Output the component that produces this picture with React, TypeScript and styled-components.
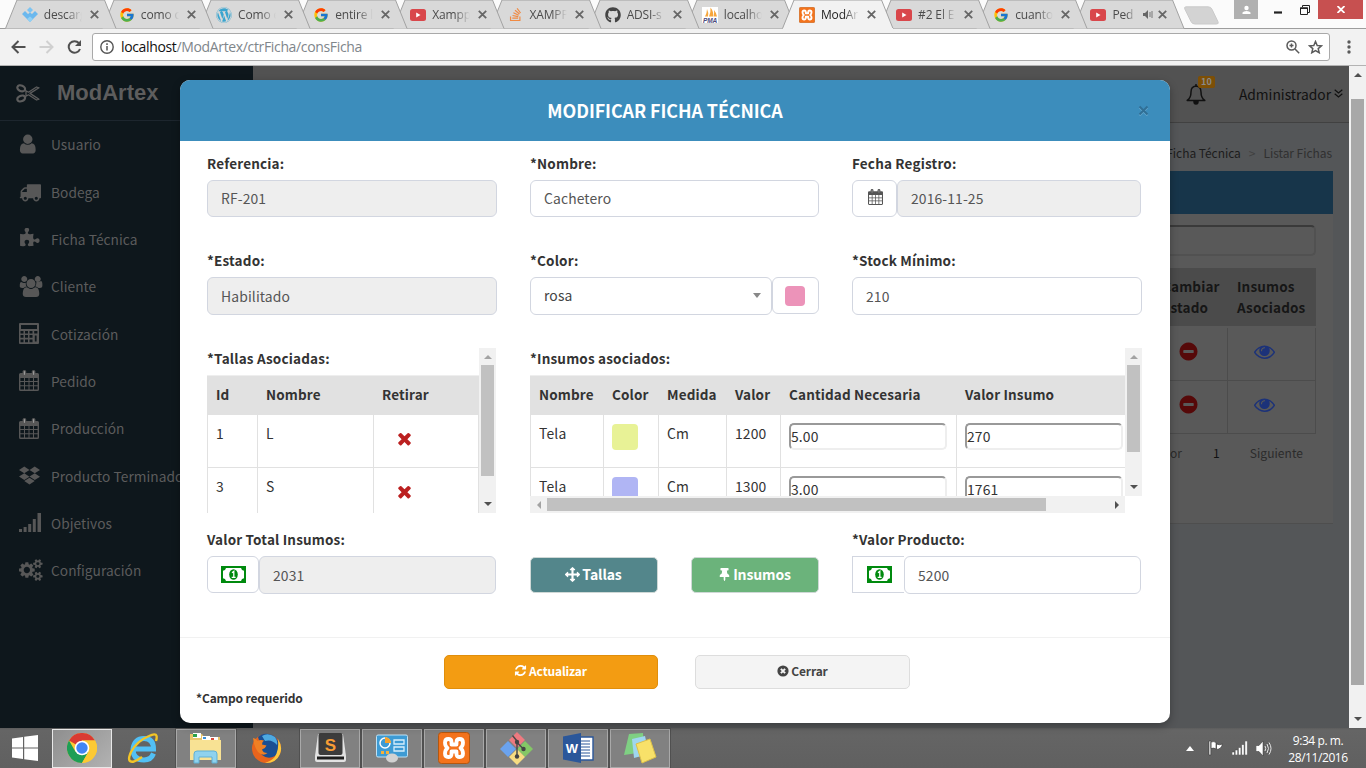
import React from "react";
import styled, { createGlobalStyle, css } from "styled-components";
import { FcGoogle } from "react-icons/fc";
import { FaWordpress, FaGithub, FaStackOverflow, FaDropbox, FaThumbtack } from "react-icons/fa";

const GlobalStyle = createGlobalStyle`
  * { box-sizing: border-box; }
  body { margin: 0; overflow: hidden; background: #545658; }
`;

const source = `"Noto Sans CJK JP", "Noto Sans CJK SC", sans-serif`;
const segoe = `"Open Sans", "Noto Sans", sans-serif`;

/* ---------- icons ---------- */

const FA = {
  user: "M1536 1399q0 109-62.5 187t-150.5 78h-854q-88 0-150.5-78t-62.5-187q0-85 8.5-160.5t31.5-152 58.5-131 94-89 134.5-34.5q131 128 313 128t313-128q76 0 134.5 34.5t94 89 58.5 131 31.5 152 8.5 160.5zm-256-887q0 159-112.5 271.5t-271.5 112.5-271.5-112.5-112.5-271.5 112.5-271.5 271.5-112.5 271.5 112.5 112.5 271.5z",
  truck: "M640 1408q0-52-38-90t-90-38-90 38-38 90 38 90 90 38 90-38 38-90zm-384-512h384v-256h-158q-13 0-22 9l-195 195q-9 9-9 22v30zm1280 512q0-52-38-90t-90-38-90 38-38 90 38 90 90 38 90-38 38-90zm256-1088v1024q0 15-4 26.5t-13.5 18.5-16.5 11.5-23.5 6-22.5 2-25.5 0-22.5-.5q0 106-75 181t-181 75-181-75-75-181h-384q0 106-75 181t-181 75-181-75-75-181h-64q-3 0-22.5.5t-25.5 0-22.5-2-23.5-6-16.5-11.5-13.5-18.5-4-26.5q0-26 19-45t45-19v-320q0-8-.5-35t0-38 2.5-34.5 6.5-37 14-30.5 22.5-30l198-198q19-19 50.5-32t58.5-13h160v-192q0-26 19-45t45-19h1024q26 0 45 19t19 45z",
  puzzle: "M1755 1083q0 81-44.5 135t-123.5 54q-41 0-77.5-17.5t-59-38-56.5-38-71-17.5q-110 0-110 124 0 39 16 115t15 115v5q-22 0-33 1-34 3-97.5 11.5t-115.5 13.5-98 5q-61 0-103-26.5t-42-83.5q0-37 17.5-71t38-56.5 38-59 17.5-77.5q0-79-54-123.5t-135-44.5q-84 0-143 45.5t-59 127.5q0 43 15 83t33.5 64.5 33.5 53 15 50.5q0 45-46 89-37 35-117 35-95 0-245-24-9-2-27.5-4t-27.5-4l-13-2q-1 0-3-1-2 0-2-1v-1024q2 1 17.5 3.5t34 5 21.5 3.5q150 24 245 24 80 0 117-35 46-44 46-89 0-22-15-50.5t-33.5-53-33.5-64.5-15-83q0-82 59-127.5t144-45.5q80 0 134 44.5t54 123.5q0 41-17.5 77.5t-38 59-38 56.5-17.5 71q0 57 42 83.5t103 26.5q64 0 180-15t163-17v2q-1 2-3.5 17.5t-5 34-3.5 21.5q-24 150-24 245 0 80 35 117 44 46 89 46 22 0 50.5-15t53-33.5 64.5-33.5 83-15q82 0 127.5 59t45.5 143z",
  users: "M657 896q-162 5-265 128h-134q-82 0-138-40.5t-56-118.5q0-353 124-353 6 0 43.5 21t97.5 42.5 119 21.5q67 0 133-23-5 37-5 66 0 159 93 332zm1071 637q0 120-73 189.5t-194 69.5h-874q-121 0-194-69.5t-73-189.5q0-53 3.5-103.5t14-109 26.5-108.5 43-97.5 62-81 85.5-53.5 111.5-20q10 0 43 21.5t73 48 107 48 135 21.5 135-21.5 107-48 73-48 43-21.5q61 0 111.5 20t85.5 53.5 62 81 43 97.5 26.5 108.5 14 109 3.5 103.5zm-1024-1277q0 106-75 181t-181 75-181-75-75-181 75-181 181-75 181 75 75 181zm704 384q0 159-112.5 271.5t-271.5 112.5-271.5-112.5-112.5-271.5 112.5-271.5 271.5-112.5 271.5 112.5 112.5 271.5zm576 225q0 78-56 118.5t-138 40.5h-134q-103-123-265-128 93-173 93-332 0-29-5-66 66 23 133 23 59 0 119-21.5t97.5-42.5 43.5-21q124 0 124 353zm-128-609q0 106-75 181t-181 75-181-75-75-181 75-181 181-75 181 75 75 181z",
  cogs: "M896 896q0-106-75-181t-181-75-181 75-75 181 75 181 181 75 181-75 75-181zm768 512q0-52-38-90t-90-38-90 38-38 90q0 53 37.5 90.5t90.5 37.5 90.5-37.5 37.5-90.5zm0-1024q0-52-38-90t-90-38-90 38-38 90q0 53 37.5 90.5t90.5 37.5 90.5-37.5 37.5-90.5zm-384 421v185q0 10-7 19.5t-16 10.5l-155 24q-11 35-32 76 34 48 90 115 7 11 7 20 0 12-7 19-23 30-82.5 89.5t-78.5 59.5q-11 0-21-7l-115-90q-37 19-77 31-11 108-23 155-7 24-30 24h-186q-11 0-20-7.5t-10-17.5l-23-153q-34-10-75-31l-118 89q-7 7-20 7-11 0-21-8-144-133-144-160 0-9 7-19 10-14 41-53t47-61q-23-44-35-82l-152-24q-10-1-17-9.5t-7-19.5v-185q0-10 7-19.5t16-10.5l155-24q11-35 32-76-34-48-90-115-7-11-7-20 0-12 7-20 22-30 82-89t79-59q11 0 21 7l115 90q34-18 77-32 11-108 23-154 7-24 30-24h186q11 0 20 7.5t10 17.5l23 153q34 10 75 31l118-89q8-7 20-7 11 0 21 8 144 133 144 160 0 8-7 19-12 16-42 54t-45 60q23 48 34 82l152 23q10 2 17 10.5t7 19.5zm640 533v140q0 16-149 31-12 27-30 52 51 113 51 138 0 4-4 7-122 71-124 71-8 0-46-47t-52-68q-20 2-30 2t-30-2q-14 21-52 68t-46 47q-2 0-124-71-4-3-4-7 0-25 51-138-18-25-30-52-149-15-149-31v-140q0-16 149-31 13-29 30-52-51-113-51-138 0-4 4-7 4-2 35-20t59-34 30-16q8 0 46 46.5t52 67.5q20-2 30-2t30 2q51-71 92-112l6-2q4 0 124 70 4 3 4 7 0 25-51 138 17 23 30 52 149 15 149 31zm0-1024v140q0 16-149 31-12 27-30 52 51 113 51 138 0 4-4 7-122 71-124 71-8 0-46-47t-52-68q-20 2-30 2t-30-2q-14 21-52 68t-46 47q-2 0-124-71-4-3-4-7 0-25 51-138-18-25-30-52-149-15-149-31v-140q0-16 149-31 13-29 30-52-51-113-51-138 0-4 4-7 4-2 35-20t59-34 30-16q8 0 46 46.5t52 67.5q20-2 30-2t30 2q51-71 92-112l6-2q4 0 124 70 4 3 4 7 0 25-51 138 17 23 30 52 149 15 149 31z",
  times: "M1490 1322q0 40-28 68l-136 136q-28 28-68 28t-68-28l-294-294-294 294q-28 28-68 28t-68-28l-136-136q-28-28-28-68t28-68l294-294-294-294q-28-28-28-68t28-68l136-136q28-28 68-28t68 28l294 294 294-294q28-28 68-28t68 28l136 136q28 28 28 68t-28 68l-294 294 294 294q28 28 28 68z",
  eye: "M1664 960q-152-236-381-353 61 104 61 225 0 185-131.5 316.5t-316.5 131.5-316.5-131.5-131.5-316.5q0-121 61-225-229 117-381 353 133 205 333.5 326.5t434.5 121.5 434.5-121.5 333.5-326.5zm-720-384q0-20-14-34t-34-14q-125 0-214.5 89.5t-89.5 214.5q0 20 14 34t34 14 34-14 14-34q0-86 61-147t147-61q20 0 34-14t14-34zm848 384q0 34-20 69-140 230-376.5 368.5t-499.5 138.5-499.5-139-376.5-368q-20-35-20-69t20-69q140-229 376.5-368t499.5-139 499.5 139 376.5 368q20 35 20 69z",
  minusCircle: "M1344 960v-128q0-26-19-45t-45-19h-768q-26 0-45 19t-19 45v128q0 26 19 45t45 19h768q26 0 45-19t19-45zm320-64q0 209-103 385.5t-279.5 279.5-385.5 103-385.5-103-279.5-279.5-103-385.5 103-385.5 279.5-279.5 385.5-103 385.5 103 279.5 279.5 103 385.5z",
  refresh: "M1639 1056q0 5-1 7-64 268-268 434.5t-478 166.5q-146 0-282.5-55t-243.5-157l-129 129q-19 19-45 19t-45-19-19-45v-448q0-26 19-45t45-19h448q26 0 45 19t19 45-19 45l-137 137q71 66 161 102t187 36q134 0 250-65t186-179q11-17 53-117 8-23 30-23h192q13 0 22.5 9.5t9.5 22.5zm25-800v448q0 26-19 45t-45 19h-448q-26 0-45-19t-19-45 19-45l138-138q-148-137-349-137-134 0-250 65t-186 179q-11 17-53 117-8 23-30 23h-199q-13 0-22.5-9.5t-9.5-22.5v-7q65-268 270-434.5t480-166.5q146 0 284 55.5t245 156.5l130-129q19-19 45-19t45 19 19 45z",
  arrows: "M1792 896q0 26-19 45l-256 256q-19 19-45 19t-45-19-19-45v-128h-384v384h128q26 0 45 19t19 45-19 45l-256 256q-19 19-45 19t-45-19l-256-256q-19-19-19-45t19-45 45-19h128v-384h-384v128q0 26-19 45t-45 19-45-19l-256-256q-19-19-19-45t19-45l256-256q19-19 45-19t45 19 19 45v128h384v-384h-128q-26 0-45-19t-19-45 19-45l256-256q19-19 45-19t45 19l256 256q19 19 19 45t-19 45-45 19h-128v384h384v-128q0-26 19-45t45-19 45 19l256 256q19 19 19 45z",
};

const Glyph = ({ d, w = 1792, size = 16, x = 0 }: { d: string; w?: number; size?: number; x?: number }) => (
  <svg width={(size * w) / 1792} height={size} viewBox={`${x} 0 ${w} 1792`} fill="currentColor"><path d={d} /></svg>
);

const CalendarIcon = ({ w, h }: { w: number; h: number }) => (
  <svg width={w} height={h} viewBox="0 0 20 21" fill="currentColor" preserveAspectRatio="none">
    <path fillRule="evenodd" d="M1.5 3H18.500Q20 3 20 4.500V19.500Q20 21 18.500 21H1.500Q0 21 0 19.500V4.500Q0 3 1.500 3ZM1.400 8V11H5V8ZM6 8V11H9.500V8ZM10.500 8V11H14V8ZM15 8V11H18.600V8ZM1.400 12V15.200H5V12ZM6 12V15.200H9.500V12ZM10.500 12V15.200H14V12ZM15 12V15.200H18.600V12ZM1.400 16.200V19.600H5V16.200ZM6 16.200V19.600H9.500V16.200ZM10.500 16.200V19.600H14V16.200ZM15 16.200V19.600H18.600V16.200Z" />
    <rect x="3.600" y="0" width="3.600" height="6" rx="1.600" /><rect x="12.800" y="0" width="3.600" height="6" rx="1.600" />
    <rect x="4.900" y="1.200" width="1" height="3.600" fill="#fff" opacity=".45" /><rect x="14.100" y="1.200" width="1" height="3.600" fill="#fff" opacity=".45" />
  </svg>
);

const CalculatorIcon = () => (
  <svg width="20" height="21" viewBox="0 0 20 21" fill="currentColor">
    <path fillRule="evenodd" d="M1 0H19Q20 0 20 1V20Q20 21 19 21H1Q0 21 0 20V1Q0 0 1 0ZM2 2V6H18V2ZM1.500 8V10.500H4.500V8ZM6 8V10.500H9V8ZM10.500 8V10.500H13.500V8ZM15.200 8V10.500H18.400V8ZM1.500 12V14.800H4.500V12ZM6 12V14.800H9V12ZM10.500 12V14.800H13.500V12ZM15.800 12.600V18.600H17.600V12.600ZM1.500 16.400V19.200H4.500V16.400ZM6 16.400V19.200H9V16.400ZM10.500 16.400V19.200H13.500V16.400Z" />
  </svg>
);

const SignalIcon = () => (
  <svg width="22" height="19" viewBox="0 0 22 19" fill="currentColor">
    <path d="M0 16h3v3H0zM4.600 14h3v5h-3zM9.200 11h3v8h-3zM13.800 6h3v13h-3zM18.500 0h3.500v19h-3.500z" />
  </svg>
);

const ScissorsIcon = () => (
  <svg width="24" height="19" viewBox="0 0 24 19" fill="none" stroke="currentColor" strokeWidth="1.500">
    <ellipse cx="5.200" cy="4.300" rx="4" ry="2.800" strokeWidth="2.200" transform="rotate(22 5.200 4.300)" />
    <ellipse cx="5.200" cy="14.500" rx="4" ry="2.800" strokeWidth="2.200" transform="rotate(-22 5.200 14.500)" />
    <path d="M9 6.200 12.500 8.200 20.500 3 23 3.800 14 9.400 23 15.200 20.500 16 12.500 10.800 9 12.800M10 6.800v5.500" strokeLinejoin="round" strokeWidth="1.300" />
  </svg>
);

const MoneyIcon = () => (
  <svg width="25" height="17" viewBox="0 0 25 17">
    <rect width="25" height="17" fill="#008a0e" />
    <path d="M5 2H20Q20.500 4.500 23 4.800V12.200Q20.500 12.500 20 15H5Q4.500 12.500 2 12.200V4.800Q4.500 4.500 5 2Z" fill="#fff" />
    <ellipse cx="12.500" cy="8.500" rx="4.300" ry="5.300" fill="#008a0e" />
    <path d="M11 6.800 12.800 5.400V11M10.700 11.300H14.600" stroke="#fff" strokeWidth="1.300" fill="none" />
  </svg>
);

const TimesCircle = () => (
  <svg width="12" height="12" viewBox="0 0 12 12"><circle cx="6" cy="6" r="5.600" fill="#444" /><path d="m3.900 3.900 4.200 4.200m0-4.200-4.200 4.200" stroke="#f4f4f4" strokeWidth="2" /></svg>
);

const XamppMark = ({ size }: { size: number }) => (
  <svg width={size} height={size} viewBox="0 0 32 32">
    <rect x=".5" y=".5" width="31" height="31" rx="3" fill="#f4731c" stroke="#b4570f" />
    <path d="M13.500 12V10Q13.500 7 10.300 7T7 10.500Q7 14 9.500 16 7 18 7 21.500T10.300 25 13.500 22V20M18.500 12V10Q18.500 7 21.700 7T25 10.500Q25 14 22.500 16 25 18 25 21.500T21.700 25 18.500 22V20M13.500 12.500h5M13.500 19.500h5" fill="none" stroke="#fff" strokeWidth="3.800" strokeLinecap="round" strokeLinejoin="round" />
  </svg>
);

const YoutubeMark = () => (
  <svg width="16" height="12" viewBox="0 0 16 12"><rect width="16" height="12" rx="2.500" fill="#d9474b" /><path d="M6.200 3.500v5l4.300-2.500z" fill="#fff" /></svg>
);

const PmaMark = () => (
  <svg width="16" height="16" viewBox="0 0 16 16">
    <rect width="16" height="16" fill="#fff" />
    <path d="M3 9.500Q5 6 5 2Q7 6 6 9.500ZM7 9.500Q9 5 8.500.5Q12 5 11 9.500ZM11.500 9.500Q12.500 6 12 3Q14.500 6 15 9.500Z" fill="#f6a63c" />
    <text x="8" y="15.800" textAnchor="middle" fontFamily="Liberation Sans, sans-serif" fontWeight="700" fontStyle="italic" fontSize="6.500" fill="#4b4b7d">PMA</text>
  </svg>
);

const UptodownMark = () => (
  <svg width="16" height="16" viewBox="0 0 16 16">
    <path d="M8 0l3 3-3 3-3-3z" fill="#7cc4f2" /><path d="M3 4l3 3 2-1.500L10 7l3-3 3 3-8 8-8-8z" fill="#6bb8ee" /><path d="M8 9.500l3 2.500-3 3-3-3z" fill="#8fd0f6" />
  </svg>
);

/* ---------- browser frame ---------- */

const Screen = styled.div`
  width: 1366px; height: 768px; display: flex; flex-direction: column; overflow: hidden;
  font-family: ${source}; position: relative;
  svg { display: block; flex: none; }
`;
const TabStrip = styled.div`
  height: 29px; flex: none; display: flex; background: #fbfbfb; padding-left: 4.700px; position: relative;
  border-bottom: 1px solid #9d9d9d;
`;
const TabBox = styled.div<{ $z: number; $active?: boolean }>`
  width: 112px; height: 29px; margin-right: -14.850px; flex: none; position: relative; z-index: ${p => p.$z};
  display: flex; align-items: center; padding-left: 17px;
  font: 12px ${segoe}; letter-spacing: -0.150px; color: ${p => (p.$active ? "#222" : "#4c4c4c")};
`;
const TabShape = styled.svg` position: absolute; left: 0; top: 0; `;
const TabIcon = styled.span` width: 16px; display: flex; justify-content: center; position: relative; `;
const TabTitle = styled.span<{ $w: number }>`
  margin-left: 6px; width: ${p => p.$w}px; white-space: nowrap; position: relative;
  mask-image: linear-gradient(90deg, #000 60%, transparent 100%);
`;
const TabClose = styled.span` margin-left: auto; margin-right: 18px; position: relative; display: flex; gap: 5px; align-items: center; `;
const NewTab = styled.svg` margin: 6px 0 0 13px; `;
const WindowButtons = styled.div` margin-left: auto; display: flex; align-items: flex-start; height: 19px; margin-right: 3px; `;
const WinUser = styled.span` width: 24px; height: 19px; background: #b0b0b0; display: flex; justify-content: center; align-items: center; margin-right: 16px; `;
const WinGlyph = styled.span` width: 26px; height: 19px; display: flex; align-items: center; `;
const WinClose = styled.span` width: 45px; height: 19px; margin-left: -8px; background: #c75050; display: flex; justify-content: center; align-items: center; `;

const Toolbar = styled.div`
  height: 37px; flex: none; background: #f2f2f2; border-bottom: 1px solid #b3b3b3; display: flex; align-items: center; padding: 0 13px 1px 10px;
`;
const NavIcons = styled.div` width: 82px; display: flex; gap: 13px; padding-left: 1px; `;
const AddressBar = styled.div`
  flex: 1; height: 28px; margin-top: 1px; background: #fff; border: 1px solid #a9a9a9; border-radius: 3px; display: flex; align-items: center; padding: 0 6px 0 7px;
`;
const Url = styled.div` flex: 1; margin-left: 7px; font: 14px/20px ${segoe}; letter-spacing: -0.350px; color: #80868b; b { font-weight: 400; color: #111; } `;
const AddressIcons = styled.div` display: flex; gap: 8px; `;
const MenuDots = styled.svg` margin-left: 15px; `;

const tabs: { icon: React.ReactNode; title: string; active?: boolean; sound?: boolean }[] = [
  { icon: <UptodownMark />, title: "descarg" },
  { icon: <FcGoogle size={16} />, title: "como c" },
  { icon: <FaWordpress size={16} color="#3aa5cf" />, title: "Como c" },
  { icon: <FcGoogle size={16} />, title: "entire l" },
  { icon: <YoutubeMark />, title: "Xampp" },
  { icon: <FaStackOverflow size={15} color="#f08a43" />, title: "XAMPP" },
  { icon: <FaGithub size={16} color="#444" />, title: "ADSI-s" },
  { icon: <PmaMark />, title: "localho" },
  { icon: <XamppMark size={16} />, title: "ModAr", active: true },
  { icon: <YoutubeMark />, title: "#2 El E" },
  { icon: <FcGoogle size={16} />, title: "cuanto" },
  { icon: <YoutubeMark />, title: "Ped", sound: true },
];

const Tab = ({ icon, title, active, sound, i }: (typeof tabs)[number] & { i: number }) => (
  <TabBox $z={active ? 20 : 14 - i} $active={active}>
    <TabShape width="112" height="29" viewBox="0 0 112 29">
      <path d="M.5 28.500 12 0H99.500L111 28.500" fill={active ? "#f2f2f2" : "#d9d9d9"} stroke="#a2a2a2" />
      {active && <path d="M1 28.500h110" stroke="#f2f2f2" />}
    </TabShape>
    <TabIcon>{icon}</TabIcon>
    <TabTitle $w={sound ? 24 : 38}>{title}</TabTitle>
    <TabClose>
      {sound && <svg width="10" height="9" viewBox="0 0 10 9"><path d="M0 3h2l3-3v9L2 6H0z" fill="#666" /><path d="M7 2v5M9 1v7" stroke="#777" /></svg>}
      <svg width="9" height="9" viewBox="0 0 9 9"><path d="m.8.8 7.400 7.400m0-7.400-7.400 7.400" stroke="#666" strokeWidth="1.800" /></svg>
    </TabClose>
  </TabBox>
);

const Browser = () => (
  <>
    <TabStrip>
      {tabs.map((t, i) => <Tab key={i} {...t} i={i} />)}
      <NewTab width="35" height="19" viewBox="0 0 35 19"><path d="M2 .8h22q3 0 4 2.500l6 12.500q1 2.200-1.500 2.200H11q-3 0-4-2.500L.8 3Q0 .8 2 .8Z" fill="#d3d3d3" stroke="#cacaca" /></NewTab>
      <WindowButtons>
        <WinUser><svg width="9" height="10" viewBox="0 0 9 10" fill="#fff"><circle cx="4.500" cy="3" r="2.200" /><path d="M.5 9V7.500q1-1.500 4-1.500t4 1.500V9z" /></svg></WinUser>
        <WinGlyph><svg width="8" height="17" viewBox="0 0 8 17"><path d="M0 11.500h8" stroke="#222" strokeWidth="2.200" /></svg></WinGlyph>
        <WinGlyph><svg width="10" height="10" viewBox="0 0 10 10" fill="none" stroke="#222"><path d="M2.500 2V.5h7v7H8M.5 3h7v6.500h-7z" /><path d="M0 3.200h8" strokeWidth="1.500" /></svg></WinGlyph>
        <WinClose><svg width="8" height="7" viewBox="0 0 8 7"><path d="m.5 0 7 7m0-7-7 7" stroke="#fff" strokeWidth="1.800" /></svg></WinClose>
      </WindowButtons>
    </TabStrip>
    <Toolbar>
      <NavIcons>
        <svg width="15" height="14" viewBox="0 0 15 14" fill="none" stroke="#505050" strokeWidth="2"><path d="M14.500 7H1.800M7.500 1 1.500 7l6 6" /></svg>
        <svg width="15" height="14" viewBox="0 0 15 14" fill="none" stroke="#d0d0d0" strokeWidth="2"><path d="M.5 7h12.700M7.500 1l6 6-6 6" /></svg>
        <svg width="15" height="14" viewBox="0 0 15 14" fill="none"><path d="M12 3.200A5.800 5.800 0 1 0 13 9" stroke="#505050" strokeWidth="2" /><path d="M14 0v6H8z" fill="#505050" /></svg>
      </NavIcons>
      <AddressBar>
        <svg width="14" height="14" viewBox="0 0 14 14"><circle cx="7" cy="7" r="6.200" fill="none" stroke="#555" strokeWidth="1.400" /><path d="M7 6v4.500M7 3.300v1.600" stroke="#555" strokeWidth="1.500" /></svg>
        <Url><b>localhost</b>/ModArtex/ctrFicha/consFicha</Url>
        <AddressIcons>
          <svg width="14" height="14" viewBox="0 0 14 14" fill="none" stroke="#5a5a5a" strokeWidth="1.500"><circle cx="5.500" cy="5.500" r="4.500" /><path d="m9 9 4.200 4.200M3.500 5.500h4M5.500 3.500v4" /></svg>
          <svg width="15" height="14" viewBox="0 0 15 14" fill="none" stroke="#5a5a5a" strokeWidth="1.500"><path d="m7.500 1.500 1.700 4 4.300.3-3.300 2.800 1 4.100-3.700-2.200-3.700 2.200 1-4.100L1.500 5.800l4.300-.3z" /></svg>
        </AddressIcons>
      </AddressBar>
      <MenuDots width="8" height="14" viewBox="0 0 8 14" fill="#5a5a5a"><circle cx="4" cy="2" r="1.700" /><circle cx="4" cy="7" r="1.700" /><circle cx="4" cy="12" r="1.700" /></MenuDots>
    </Toolbar>
  </>
);

/* ---------- page behind the dialog ---------- */

const Page = styled.div` height: 662px; flex: none; display: flex; position: relative; `;
const Sidebar = styled.aside` width: 253px; background: #0e171c; color: #5c5c5c; overflow: hidden; `;
const Brand = styled.div`
  height: 55px; border-bottom: 1px solid #1d262e; display: flex; align-items: center; padding-left: 16px; gap: 17px;
  font: 700 22px "Liberation Sans", sans-serif; letter-spacing: 0; color: #5d5d5d;
`;
const Menu = styled.nav` padding-top: 0.500px; `;
const MenuItem = styled.div` height: 47.350px; display: flex; align-items: center; font-size: 13.700px; letter-spacing: 0.050px; white-space: nowrap; padding-bottom: 2px; `;
const MenuIcon = styled.span` width: 32px; margin-left: 19px; display: flex; color: #575757; `;

const menu: [React.ReactNode, string][] = [
  [<Glyph d={FA.user} size={22} x={180} />, "Usuario"],
  [<Glyph d={FA.truck} size={22} />, "Bodega"],
  [<Glyph d={FA.puzzle} size={21} />, "Ficha Técnica"],
  [<Glyph d={FA.users} w={2048} size={21} />, "Cliente"],
  [<CalculatorIcon />, "Cotización"],
  [<CalendarIcon w={20} h={21} />, "Pedido"],
  [<CalendarIcon w={20} h={21} />, "Producción"],
  [<FaDropbox size={21} />, "Producto Terminado"],
  [<SignalIcon />, "Objetivos"],
  [<Glyph d={FA.cogs} w={1920} size={22} />, "Configuración"],
];

const Main = styled.main` flex: 1; background: #545658; display: flex; flex-direction: column; align-items: flex-end; `;
const TopBar = styled.header`
  width: 100%; height: 57px; background: #525252; border-bottom: 1px solid #414141; display: flex; justify-content: flex-end; align-items: center; padding: 0 6px 1px 0;
`;
const Bell = styled.div` position: relative; width: 20px; margin-right: 33px; `;
const Badge = styled.span`
  position: absolute; left: 12px; top: -7px; width: 17px; height: 12px; border-radius: 2px; background: #7d4f06; color: #8a8a8a; font: 700 9px/11px ${source}; text-align: center;
`;
const UserName = styled.span` font-size: 13.800px; letter-spacing: 0; color: #111; margin-right: 3px; `;
const Crumbs = styled.div` height: 48px; padding: 13px 17px 0 0; display: flex; gap: 8px; font-size: 12px; line-height: 34px; letter-spacing: -0.050px; color: #1c1c1c; `;
const Muted = styled.span<{ $faint?: boolean }>` color: ${p => (p.$faint ? "#404040" : "#303030")}; `;
const Panel = styled.section` width: 330px; height: 353px; margin-right: 16px; background: #595959; border-bottom: 1px solid #4e4e4e; `;
const PanelHead = styled.div` height: 43px; background: #17354a; `;
const PanelBody = styled.div` padding: 11px 17px; display: flex; flex-direction: column; align-items: flex-end; `;
const Search = styled.div` width: 300px; height: 31px; border: 2px solid; border-color: #3a3a3a #515151 #515151 #3a3a3a; border-radius: 5px; `;
const BackTable = styled.div` width: 200px; margin-top: 12px; `;
const BackRow = styled.div<{ $head?: boolean }>`
  display: grid; grid-template-columns: 34px 77px 89px; height: ${p => (p.$head ? 58 : 53)}px;
  ${p => p.$head ? css`background: #4b4b4b; margin-bottom: 2px;` : css`border-bottom: 1px solid #4c4c4c; border-right: 1px solid #4c4c4c;`}
`;
const BackCell = styled.div<{ $pad: number }>` font-weight: 700; font-size: 13.500px; line-height: 21px; letter-spacing: 0.150px; color: #161616; padding: 8px 0 0 ${p => p.$pad}px; `;
const BackIcon = styled.div<{ $color: string; $pad: number }>` border-left: 1px solid #4c4c4c; color: ${p => p.$color}; padding: 13px 0 0 ${p => p.$pad}px; `;
const Pager = styled.div` display: flex; font-size: 12px; line-height: 20px; padding: 9px 13px 0 0; color: #2b2b2b; letter-spacing: 0.050px; b { font-weight: 400; color: #111; margin: 0 30px 0 31px; } `;

const Track = styled.div<{ $h?: boolean; $len: number }>`
  background: #f1f1f1; flex: none; display: flex; align-items: center; flex-direction: ${p => (p.$h ? "row" : "column")};
  ${p => p.$h ? css`height: 17px; width: ${p.$len}px;` : css`width: 17px; height: ${p.$len}px;`}
`;
const ArrowBox = styled.span<{ $end?: boolean }>` width: 17px; height: 17px; display: flex; align-items: center; justify-content: center; ${p => p.$end && "margin: auto 0 0 auto;"} `;
const Thumb = styled.span<{ $h?: boolean; $len: number; $offset: number; $color: string }>`
  background: ${p => p.$color};
  ${p => p.$h ? css`height: 13px; width: ${p.$len}px; margin-left: ${p.$offset}px;` : css`width: 13px; height: ${p.$len}px; margin-top: ${p.$offset}px;`}
`;
const arrowPaths = { up: "M0 5 4 1l4 4z", down: "M0 0h8L4 4z", left: "M6 0v8L2 4z", right: "M2 0v8l4-4z" };
const Arrow = ({ dir, color, end }: { dir: keyof typeof arrowPaths; color: string; end?: boolean }) => (
  <ArrowBox $end={end}><svg width="8" height={dir === "up" || dir === "down" ? 6 : 8} viewBox={dir === "up" || dir === "down" ? "0 0 8 6" : "0 0 8 8"}><path d={arrowPaths[dir]} fill={color} /></svg></ArrowBox>
);
const Scrollbar = ({ horizontal, len, thumb, offset = 0, color = "#c1c1c1", start = "#a3a3a3" }: { horizontal?: boolean; len: number; thumb: number; offset?: number; color?: string; start?: string }) => (
  <Track $h={horizontal} $len={len}>
    <Arrow dir={horizontal ? "left" : "up"} color={start} />
    <Thumb $h={horizontal} $len={thumb} $offset={offset} $color={color} />
    <Arrow dir={horizontal ? "right" : "down"} color="#505050" end />
  </Track>
);

const Backdrop = () => (
  <>
    <Sidebar>
      <Brand><ScissorsIcon />ModArtex</Brand>
      <Menu>{menu.map(([icon, label]) => <MenuItem key={label}><MenuIcon>{icon}</MenuIcon>{label}</MenuItem>)}</Menu>
    </Sidebar>
    <Main>
      <TopBar>
        <Bell>
          <svg width="20" height="22" viewBox="0 0 20 22" fill="none" stroke="#111" strokeWidth="1.500"><path d="M10 3q5 .5 5 6 0 6 3.800 8.500H1.200Q5 15 5 9q0-5.500 5-6Z" strokeLinejoin="round" /><path d="M8 18.500q0 2.500 2 2.500t2-2.500z" fill="#111" /><path d="M10 1v2" /></svg>
          <Badge>10</Badge>
        </Bell>
        <UserName>Administrador</UserName>
        <svg width="9" height="9" viewBox="0 0 9 9" fill="none" stroke="#111" strokeWidth="1.200"><path d="m.7.7 3.800 3.300L8.300.7M.7 4.700 4.500 8l3.800-3.300" /></svg>
      </TopBar>
      <Crumbs><span>Ficha Técnica</span><Muted $faint>&gt;</Muted><Muted>Listar Fichas</Muted></Crumbs>
      <Panel>
        <PanelHead />
        <PanelBody>
          <Search />
          <BackTable>
            <BackRow $head><span /><BackCell $pad={12}>Cambiar<br />Estado</BackCell><BackCell $pad={10}>Insumos<br />Asociados</BackCell></BackRow>
            {[0, 1].map(i => (
              <BackRow key={i}>
                <span />
                <BackIcon $color="#560909" $pad={27}><Glyph d={FA.minusCircle} size={21} /></BackIcon>
                <BackIcon $color="#1c3279" $pad={26}><Glyph d={FA.eye} size={21} /></BackIcon>
              </BackRow>
            ))}
          </BackTable>
          <Pager>Anterior<b>1</b>Siguiente</Pager>
        </PanelBody>
      </Panel>
    </Main>
    <Scrollbar len={662} thumb={586} offset={16} color="#a8a8a8" start="#505050" />
  </>
);

/* ---------- dialog ---------- */

const Dialog = styled.div`
  position: absolute; left: 180px; top: 14px; width: 990px; height: 643px; background: #fff; border-radius: 10px;
  box-shadow: 0 3px 9px rgba(0,0,0,.3); overflow: hidden; display: flex; flex-direction: column;
`;
const DialogHead = styled.div`
  height: 61px; flex: none; background: #3c8dbc; color: #fff; display: flex; align-items: center; justify-content: center; position: relative;
  font-weight: 700; font-size: 17.900px; letter-spacing: -0.080px; padding: 0 20px 2px 0;
`;
const CloseX = styled.svg` position: absolute; right: 21px; top: 25px; `;
const DialogBody = styled.div` height: 497px; padding: 12px 28px 0 27px; border-bottom: 1px solid #f1f1f1; `;
const FieldRow = styled.div<{ $h: number }>` display: grid; grid-template-columns: 290px 289px 290px; column-gap: 33px; height: ${p => p.$h}px; `;
const Field = styled.div` min-width: 0; `;
const Label = styled.label` display: block; height: 27px; font-weight: 700; font-size: 13.500px; line-height: 20px; letter-spacing: 0.180px; color: #333; white-space: nowrap; `;
const Group = styled.div` display: flex; align-items: flex-start; `;
const Box = styled.div<{ $w?: number; $h: number; $gray?: boolean; $square?: boolean; $dark?: boolean }>`
  width: ${p => (p.$w ? `${p.$w}px` : "100%")}; height: ${p => p.$h}px; border: 1px solid #d2d6e0; border-radius: ${p => (p.$square ? 0 : 6)}px;
  background: ${p => (p.$gray ? "#eee" : "#fff")}; display: flex; align-items: center; padding: 0 0 ${p => (p.$h === 37 ? 2 : p.$dark ? 2 : 1)}px 13px;
  font-size: 13.900px; letter-spacing: 0.120px; color: ${p => (p.$dark ? "#444" : "#555")};
`;
const Addon = styled(Box)<{ $lift?: number }>` padding: 0 0 ${p => p.$lift ?? 0}px 1px; justify-content: center; flex: none; ${p => p.$square && "border-right: 0;"} `;
const SwatchAddon = styled(Addon)` padding: 0 1px 0 0; `;
const Caret = styled.svg` margin: 0 10px 0 auto; `;
const Swatch = styled.span<{ $color: string; $size: number }>` display: block; width: ${p => p.$size}px; height: ${p => p.$size}px; border-radius: 4px; background: ${p => p.$color}; `;

const Tables = styled.div` display: flex; gap: 34px; height: 165px; `;
const ScrollPane = styled.div<{ $w: number }>` width: ${p => p.$w}px; height: 165px; display: flex; `;
const PaneColumn = styled.div` flex: 1; min-width: 0; `;
const Viewport = styled.div<{ $h: number }>` height: ${p => p.$h}px; overflow: hidden; `;
const Row = styled.div<{ $cols: string; $head?: boolean }>`
  display: grid; grid-template-columns: ${p => p.$cols}; font-size: 13.900px; letter-spacing: 0.150px; color: #333; border-top: 1px solid #e1e1e1;
  ${p => p.$head ? css`height: 39px; background: #e1e1e1; font-weight: 700; font-size: 13.500px; letter-spacing: 0.150px; border-color: #eee;` : css`height: 53px;`}
`;
const Cell = styled.div<{ $head?: boolean; $pad?: number; $last?: boolean }>`
  border-left: 1px solid #e1e1e1; padding: 8px 0 0 ${p => p.$pad ?? 8}px; line-height: 21px; white-space: nowrap;
  ${p => p.$last && "border-right: 1px solid #e1e1e1;"}
`;
const RedMark = styled.div` color: #bb2020; padding-top: 6px; `;
const SwatchHolder = styled.div` padding-top: 1px; `;
const QuantityBox = styled.div` width: 158px; height: 27px; border: 2px solid; border-color: #999 #eee #eee #999; border-radius: 5px; line-height: 23px; `;

const FieldTop = styled(Field)` padding-top: 16px; `;
const ActionSlot = styled.div` padding-top: 28px; display: flex; justify-content: space-between; `;
const ActionButton = styled.button<{ $bg: string }>`
  width: 128px; height: 36px; border: 1px solid #cfd8d6; border-radius: 5px; background: ${p => p.$bg}; color: #fff; font: 700 14px ${source}; letter-spacing: -0.120px; padding: 0 1px 2px 0;
  display: flex; align-items: center; justify-content: center; gap: 2px;
`;
const Footer = styled.div` flex: 1; display: flex; flex-direction: column; padding: 17px 0 0 16px; `;
const FooterButtons = styled.div` display: flex; gap: 37px; padding-left: 248px; height: 34px; `;
const FooterButton = styled.button<{ $primary?: boolean }>`
  width: ${p => (p.$primary ? 214 : 215)}px; height: 34px; border-radius: 5px; font: 700 12px ${source}; letter-spacing: -0.150px; padding: 0 ${p => (p.$primary ? 1 : 0)}px 3px 0;
  display: flex; align-items: center; justify-content: center; gap: 2px;
  ${p => p.$primary ? css`background: #f39c12; border: 1px solid #e08e0b; color: #fff;` : css`background: #f4f4f4; border: 1px solid #ddd; color: #444;`}
`;
const Required = styled.div` font-weight: 700; font-size: 12px; line-height: 17px; letter-spacing: -0.150px; color: #333; `;

const sizeCols = "50px 116px 106px";
const supplyCols = "73px 55px 68px 54px 176px 169px";
const supplies = [
  { color: "#e8f296", value: "1200", qty: "5.00", total: "270" },
  { color: "#b0b5f4", value: "1300", qty: "3.00", total: "1761" },
];

const EditDialog = () => (
  <Dialog>
    <DialogHead>
      MODIFICAR FICHA TÉCNICA
      <CloseX width="11" height="11" viewBox="0 0 11 11"><path d="m1.500 2.500 8 8m0-8-8 8" stroke="#67a8cd" strokeWidth="2" /><path d="m1.500 1.500 8 8m0-8-8 8" stroke="#306f95" strokeWidth="2" /></CloseX>
    </DialogHead>
    <DialogBody>
      <FieldRow $h={97}>
        <Field><Label>Referencia:</Label><Box $h={37} $gray>RF-201</Box></Field>
        <Field><Label>*Nombre:</Label><Box $h={37}>Cachetero</Box></Field>
        <Field><Label>Fecha Registro:</Label>
          <Group><Addon $w={45} $h={37} $lift={4}><CalendarIcon w={15} h={16} /></Addon><Box $w={244} $h={37} $gray>2016-11-25</Box></Group></Field>
      </FieldRow>
      <FieldRow $h={98}>
        <Field><Label>*Estado:</Label><Box $h={38} $gray>Habilitado</Box></Field>
        <Field><Label>*Color:</Label>
          <Group>
            <Box $w={242} $h={38} $dark>rosa<Caret width="8" height="5" viewBox="0 0 8 5"><path d="M0 0h8L4 5z" fill="#888" /></Caret></Box>
            <SwatchAddon $w={47} $h={37}><Swatch $color="#ec93b9" $size={20} /></SwatchAddon>
          </Group></Field>
        <Field><Label>*Stock Mínimo:</Label><Box $h={38}>210</Box></Field>
      </FieldRow>
      <Tables>
        <ScrollPane $w={289}>
          <PaneColumn>
            <Viewport $h={165}>
              <Label>*Tallas Asociadas:</Label>
              <Row $cols={sizeCols} $head><Cell $head>Id</Cell><Cell $head>Nombre</Cell><Cell $head>Retirar</Cell></Row>
              {[["1", "L"], ["3", "S"]].map(([id, name]) => (
                <Row $cols={sizeCols} key={id}><Cell>{id}</Cell><Cell>{name}</Cell><Cell $pad={21} $last><RedMark><Glyph d={FA.times} size={19} /></RedMark></Cell></Row>
              ))}
            </Viewport>
          </PaneColumn>
          <Scrollbar len={165} thumb={111} />
        </ScrollPane>
        <ScrollPane $w={612}>
          <PaneColumn>
            <Viewport $h={148}>
              <Label>*Insumos asociados:</Label>
              <Row $cols={supplyCols} $head>
                {["Nombre", "Color", "Medida", "Valor", "Cantidad Necesaria", "Valor Insumo"].map(t => <Cell $head key={t}>{t}</Cell>)}
              </Row>
              {supplies.map(s => (
                <Row $cols={supplyCols} key={s.value}>
                  <Cell>Tela</Cell><Cell><SwatchHolder><Swatch $color={s.color} $size={26} /></SwatchHolder></Cell><Cell>Cm</Cell><Cell>{s.value}</Cell>
                  <Cell><QuantityBox>{s.qty}</QuantityBox></Cell><Cell><QuantityBox>{s.total}</QuantityBox></Cell>
                </Row>
              ))}
            </Viewport>
            <Scrollbar horizontal len={595} thumb={499} />
          </PaneColumn>
          <Scrollbar len={148} thumb={87} />
        </ScrollPane>
      </Tables>
      <FieldRow $h={100}>
        <FieldTop><Label>Valor Total Insumos:</Label>
          <Group><Addon $w={52} $h={37}><MoneyIcon /></Addon><Box $w={237} $h={38} $gray>2031</Box></Group></FieldTop>
        <FieldTop><ActionSlot>
          <ActionButton $bg="#53868b"><Glyph d={FA.arrows} size={15} />Tallas</ActionButton>
          <ActionButton $bg="#6bb37b"><FaThumbtack size={13} />Insumos</ActionButton>
        </ActionSlot></FieldTop>
        <FieldTop><Label>*Valor Producto:</Label>
          <Group><Addon $w={52} $h={37} $square><MoneyIcon /></Addon><Box $w={237} $h={38}>5200</Box></Group></FieldTop>
      </FieldRow>
    </DialogBody>
    <Footer>
      <FooterButtons>
        <FooterButton $primary><Glyph d={FA.refresh} size={13} />Actualizar</FooterButton>
        <FooterButton><TimesCircle />Cerrar</FooterButton>
      </FooterButtons>
      <Required>*Campo requerido</Required>
    </Footer>
  </Dialog>
);

/* ---------- taskbar ---------- */

const Taskbar = styled.div` height: 40px; flex: none; background: linear-gradient(#5c5c5c 0, #656565 2px, #606060 100%); display: flex; align-items: center; `;
const Start = styled.div` width: 50px; display: flex; justify-content: center; `;
const Task = styled.div<{ $state?: "open" | "active" }>`
  width: 60px; height: 39px; margin-left: 2px; display: flex; justify-content: center; align-items: center;
  ${p => !p.$state && css`padding-right: 3px;`}
  ${p => p.$state === "open" && css`background: #818181; border: 1px solid #a9a9a9; outline: 1px solid #505050; outline-offset: 0;`}
  ${p => p.$state === "active" && css`background: linear-gradient(135deg, #8e8e8e, #b2b2b2); border: 1px solid #e8e8e8;`}
`;
const Tray = styled.div` margin-left: auto; display: flex; align-items: center; gap: 8px; margin-right: 15px; `;
const Clock = styled.div` width: 66px; text-align: center; color: #fff; font: 12px/17px ${segoe}; letter-spacing: -0.420px; margin-left: 5px; padding-top: 2px; white-space: nowrap; `;

const ChromeLogo = () => (
  <svg width="30" height="30" viewBox="0 0 30 30">
    <circle cx="15" cy="15" r="15" fill="#fcc934" />
    <path d="M15 15 2 7.500A15 15 0 0 1 28 7.500H15z" fill="#d93a32" />
    <path d="M2 7.500A15 15 0 0 0 15 30L21.500 18.800 15 15 8.500 18.800z" fill="#1e9e56" /><path d="M28 7.500H15V15l6.500 3.800L15 30A15 15 0 0 0 28 7.500z" fill="#fcc934" />
    <circle cx="15" cy="15" r="7.300" fill="#fff" /><circle cx="15" cy="15" r="5.700" fill="#4285f4" />
  </svg>
);
const IeLogo = () => (
  <svg width="32" height="32" viewBox="0 0 32 32" fill="none">
    <path d="M7 17H26.500Q26.500 6.500 17 6.500T6 17Q6 28 17 28 24 28 26.500 21.500" stroke="#52c0f5" strokeWidth="5" />
    <path d="M29 9Q32-1 22 4 10 9 4 20-1 31 7 29.500 11 28 15 25" stroke="#f3c527" strokeWidth="2.400" />
  </svg>
);
const FolderLogo = () => (
  <svg width="34" height="32" viewBox="0 0 34 32">
    <path d="M1 2h12l2 3h16v20H1z" fill="#e9c66a" /><path d="M4 1h8v5H4z" fill="#fff" /><path d="M4 2h4v3H4z" fill="#2ca24b" /><path d="M13 4h8v4h-8z" fill="#fff" /><path d="M14 5h3v2h-3z" fill="#3b8fd8" /><path d="M21 5h8v4h-8z" fill="#fff" /><path d="M22 6h3v2h-3z" fill="#d94c3a" />
    <path d="M1 8h31v20H1z" fill="#f8e294" /><path d="M5 31V22q0-3 3-3h17q3 0 3 3v9h-5v-6H10v6z" fill="#8fd2ee" stroke="#5fb0d6" />
  </svg>
);
const FirefoxLogo = () => (
  <svg width="31" height="31" viewBox="0 0 31 31">
    <circle cx="15.500" cy="15.500" r="14.500" fill="#e8641c" />
    <path d="M7 4Q12-1 20 1.500 27 4 28 12q1 8-4 11-7 4-13-1-3-4-1-8z" fill="#1b4f93" />
    <path d="M11 3q6-4 13 1 3 4 2 8-5-6-12-4z" fill="#4da9e0" />
    <path d="M2 5q3 .5 4.500 3Q9 6.500 13 7.500q-2 1.500-2 4l4.500 1q-1 3-4.500 4 1 3.500 5.500 3.500Q12 24 7 19 3 14 2 5Z" fill="#f08024" />
    <path d="M27 6q5 8 2 15-4 9.500-15 9 9-2.500 11.500-9.500Q28 14 27 6Z" fill="#fcc840" />
  </svg>
);
const SublimeLogo = () => (
  <svg width="31" height="30" viewBox="0 0 31 30"><path d="M3 1h25l3 22v4q0 2-2 2H2q-2 0-2-2v-4z" fill="#e2e2e2" /><rect x="3.500" y="0" width="24" height="22" rx="2" fill="#3c3c3c" /><path d="M2 23.500h27v3H2z" fill="#1e1e1e" />
    <text x="15.500" y="17.500" textAnchor="middle" fontFamily="Liberation Sans, sans-serif" fontWeight="700" fontSize="17" fill="#f79d35">S</text></svg>
);
const PanelLogo = () => (
  <svg width="32" height="30" viewBox="0 0 32 30"><rect x=".5" y="2" width="31" height="22" rx="1.500" fill="#3d9bd4" stroke="#bfe2f5" /><circle cx="9" cy="10" r="5" fill="none" stroke="#fff" strokeWidth="1.500" /><path d="M9 10V4a6 6 0 0 1 6 6z" fill="#f7a12b" /><path d="M18 7h10v4H18zM18 14h10v4H18z" fill="#3d9bd4" stroke="#d6effc" strokeWidth="1.300" /><path d="M5 18h3v3H5zM10 18h3v3h-3z" fill="#f6b13a" /><ellipse cx="16" cy="25" rx="6" ry="4.500" fill="#d2d2d2" /></svg>
);
const GitLogo = () => (
  <svg width="33" height="33" viewBox="0 0 33 33"><path d="M17 0l8 8-8 8-8-8z" fill="#ee7a80" /><path d="M25 9l8 8-8 8-8-8z" fill="#84c766" /><path d="M8 9l8 8-8 8-8-8z" fill="#6ba3ee" /><path d="M17 17l8 8-8 8-8-8z" fill="#f6dc81" /><path d="M12.500 3.500 17 9v16M17 10.500l6 6" stroke="#4a4a4a" strokeWidth="1.500" fill="none" /><circle cx="17" cy="10" r="2.200" fill="#444" /><circle cx="17" cy="24.500" r="2.200" fill="#444" /><circle cx="23.500" cy="17" r="2.200" fill="#444" /></svg>
);
const WordLogo = () => (
  <svg width="31" height="30" viewBox="0 0 31 30"><path d="M16 4h14v23H16z" fill="#fff" stroke="#2b579a" strokeWidth="1.400" /><path d="M18 8h9M18 11h9M18 14h9M18 17h9M18 20h9M18 23h9" stroke="#2b579a" /><path d="M0 3.500 18 0v30L0 26.500z" fill="#2b579a" />
    <text x="9" y="20" textAnchor="middle" fontFamily="Liberation Sans, sans-serif" fontWeight="700" fontSize="13" fill="#fff">W</text></svg>
);
const NotesLogo = () => (
  <svg width="33" height="31" viewBox="0 0 33 31"><path d="m5 1 14-1 1 19-20 3z" fill="#7fd083" /><path d="m8 6 13-3 4 18-15 4z" fill="#9fd6f0" /><path d="M12 11 26 6l6 18-14 6z" fill="#f8e169" stroke="#dcc04a" /></svg>
);

const tasks: [React.ReactNode, ("open" | "active")?][] = [
  [<ChromeLogo />, "active"], [<IeLogo />], [<FolderLogo />, "open"], [<FirefoxLogo />], [<SublimeLogo />, "open"], [<PanelLogo />, "open"],
  [<XamppMark size={32} />, "open"], [<GitLogo />, "open"], [<WordLogo />, "open"], [<NotesLogo />, "open"],
];

export default function App() {
  return (
    <Screen>
      <GlobalStyle />
      <Browser />
      <Page>
        <Backdrop />
        <EditDialog />
      </Page>
      <Taskbar>
        <Start><svg width="26" height="26" viewBox="0 0 26 26" fill="#fff"><path d="M0 3.600 11 2v10.400H0zM12.200 1.800 26 0v12.400H12.200zM0 13.600h11V24L0 22.400zM12.200 13.600H26V26l-13.800-1.800z" /></svg></Start>
        {tasks.map(([icon, state], i) => <Task key={i} $state={state}>{icon}</Task>)}
        <Tray>
          <svg width="14" height="5" viewBox="0 0 14 5"><path d="M0 5 4 0l4 5z" fill="#fff" /></svg>
          <svg width="16" height="16" viewBox="0 0 16 16" fill="#fff" stroke="#333" strokeWidth=".6"><path d="M1 1h1.800v14H1zM3 2q3-1 5 .5V9Q6 7.500 3 8.500zM8.500 4q3 1.500 6 0-1 5-6 5.500z" /></svg>
          <svg width="16" height="14" viewBox="0 0 16 14" fill="#fff" stroke="#444" strokeWidth=".5"><path d="M0 11h2.500v3H0zM3.200 9h2.500v5H3.200zM6.400 6.500h2.500V14H6.400zM9.600 3.500h2.500V14H9.600zM12.900 0h2.500v14h-2.500z" /></svg>
          <svg width="16" height="15" viewBox="0 0 16 15"><path d="M0 4.500h3L7 0v15l-4-4.500H0z" fill="#fff" stroke="#333" strokeWidth=".5" /><path d="M9 5q1.500 2.500 0 5M11 3q3 4.500 0 9M13 1.500q4 6 0 12" stroke="#e5e5e5" fill="none" /></svg>
          <Clock>9:34 p. m.<br />28/11/2016</Clock>
        </Tray>
      </Taskbar>
    </Screen>
  );
}
